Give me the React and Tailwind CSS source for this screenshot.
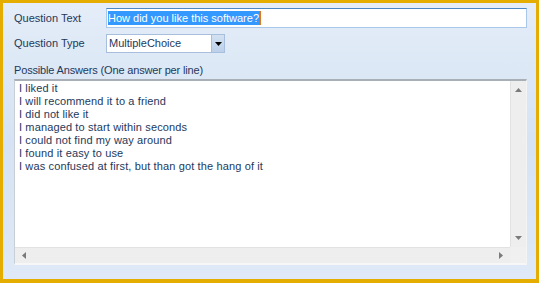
import React from 'react';

const answers = [
    'I liked it',
    'I will recommend it to a friend',
    'I did not like it',
    'I managed to start within seconds',
    'I could not find my way around',
    'I found it easy to use',
    'I was confused at first, but than got the hang of it',
];

const App = () => {
    return (
        <div
            className="w-[539px] h-[283px] border-[#e5ad00] border-t-[3px] border-l-[3px] border-r-[3px] border-b-[4px] bg-gradient-to-b from-[#e4edf8] via-[#d5e3f4] to-[#dfe9f7] flex flex-col text-[11px] leading-[13px] text-[#1e395b]"
            style={{ fontFamily: '"Liberation Sans", Arial, sans-serif' }}
        >
            {/* Question text row */}
            <div className="flex items-center pl-[11px] mt-[5px] h-[20px]">
                <label className="w-[92px]">Question Text</label>
                <div className="w-[421px] h-[20px] bg-white border border-[#a9c7e8] border-t-[#4a87c4] flex items-center pl-[1px]">
                    <span className="bg-[#3399ff] text-white h-[14px] leading-[14px] pr-[1px]">How did you like this software?</span>
                    <span className="w-[1px] h-[14px] bg-[#e0781e]" />
                </div>
            </div>

            {/* Question type row */}
            <div className="flex items-center pl-[11px] mt-[6px] h-[19px]">
                <label className="w-[92px]">Question Type</label>
                <div className="w-[119px] h-[19px] bg-white border border-[#a7bedd] flex items-stretch">
                    <span className="flex-1 pl-[2px] leading-[17px]">MultipleChoice</span>
                    <div className="w-[13px] bg-gradient-to-b from-[#d3e1f2] to-[#bcd0ea] border-l border-[#a7bedd] flex items-center justify-center">
                        <svg width="7" height="4" viewBox="0 0 7 4">
                            <path d="M0 0h7L3.5 4z" fill="#000" />
                        </svg>
                    </div>
                </div>
            </div>

            {/* Possible answers */}
            <div className="pl-[11px] mt-[11px] tracking-[-0.16px]">Possible Answers (One answer per line)</div>

            <div className="ml-[11px] mr-[9px] mt-[2px] h-[186px] flex flex-col bg-white border-t-2 border-t-[#a9afb7] border-l border-l-[#c9ced6] border-r border-r-[#f4f4f4] border-b-2 border-b-[#f7f7f7]">
                <div className="flex flex-1 min-h-0">
                    <div className="flex-1 pl-[4px] pt-[1px] tracking-[0.13px] text-[#1e395b]">
                        {answers.map((a) => (
                            <div key={a}>{a}</div>
                        ))}
                    </div>
                    <div className="w-[16px] bg-[#eeeeee] border-l border-[#e2e2e2] flex flex-col justify-between items-center py-[7px]">
                        <svg width="7" height="4" viewBox="0 0 7 4">
                            <path d="M3.5 0L7 4H0z" fill="#7a7a7a" />
                        </svg>
                        <svg width="7" height="4" viewBox="0 0 7 4">
                            <path d="M0 0h7L3.5 4z" fill="#7a7a7a" />
                        </svg>
                    </div>
                </div>
                <div className="flex h-[16px]">
                    <div className="flex-1 bg-[#eeeeee] border-t border-[#e2e2e2] flex justify-between items-center px-[7px]">
                        <svg width="4" height="7" viewBox="0 0 4 7">
                            <path d="M0 3.5L4 0v7z" fill="#7a7a7a" />
                        </svg>
                        <svg width="4" height="7" viewBox="0 0 4 7">
                            <path d="M4 3.5L0 0v7z" fill="#7a7a7a" />
                        </svg>
                    </div>
                    <div className="w-[16px] bg-[#f0f0f0]" />
                </div>
            </div>
        </div>
    );
};

export default App;
